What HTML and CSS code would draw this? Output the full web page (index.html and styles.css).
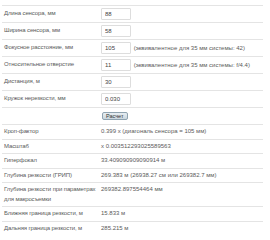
FILE: index.html
```html
<!DOCTYPE html>
<html lang="ru">
<head>
    <meta charset="UTF-8">
    <meta name="viewport" content="width=device-width, initial-scale=1.0">
    <title>Калькулятор ГРИП</title>
    <link rel="stylesheet" href="styles.css">
</head>
<body>

<div class="container">
    <table class="calc">
        <tr class="input-row">
            <td class="label">Длина сенсора, мм</td>
            <td><input type="text" value="88"></td>
        </tr>
        <tr class="input-row">
            <td class="label">Ширина сенсора, мм</td>
            <td><input type="text" value="58"></td>
        </tr>
        <tr class="input-row">
            <td class="label">Фокусное расстояние, мм</td>
            <td><input type="text" value="105"> <span class="hint">(эквивалентное для 35 мм системы: 42)</span></td>
        </tr>
        <tr class="input-row">
            <td class="label">Относительное отверстие</td>
            <td><input type="text" value="11"> <span class="hint">(эквивалентное для 35 мм системы: f/4.4)</span></td>
        </tr>
        <tr class="input-row">
            <td class="label">Дистанция, м</td>
            <td><input type="text" value="30"></td>
        </tr>
        <tr class="input-row">
            <td class="label">Кружок нерезкости, мм</td>
            <td><input type="text" value="0.030"></td>
        </tr>
        <tr class="input-row">
            <td class="label"></td>
            <td><button type="button">Расчет</button></td>
        </tr>
        <tr>
            <td class="label">Кроп-фактор</td>
            <td>0.399 x (диагональ сенсора = 105 мм)</td>
        </tr>
        <tr>
            <td class="label">Масштаб</td>
            <td>x 0.003512293025589563</td>
        </tr>
        <tr>
            <td class="label">Гиперфокал</td>
            <td>33.409090909090914 м</td>
        </tr>
        <tr>
            <td class="label">Глубина резкости (ГРИП)</td>
            <td>269.383 м (26938.27 см или 269382.7 мм)</td>
        </tr>
        <tr>
            <td class="label">Глубина резкости при параметрах для макросъемки</td>
            <td>269382.897554464 мм</td>
        </tr>
        <tr>
            <td class="label">Ближняя граница резкости, м</td>
            <td>15.833 м</td>
        </tr>
        <tr>
            <td class="label">Дальняя граница резкости, м</td>
            <td>285.215 м</td>
        </tr>
    </table>
</div>

</body>
</html>
```

FILE: styles.css
```css
body {
    font-family: "Liberation Sans", Arial, sans-serif;
    font-size: 6px;
    margin: 0;
    padding: 0;
    background-color: #fff;
    color: #5a5a5a;
}
.container {
    padding: 5px 7px 0 2px;
}
.calc {
    width: 100%;
    border-collapse: collapse;
    table-layout: fixed;
}
.calc td {
    border-top: 1px solid #e4e4e4;
    padding: 2px 2px;
    line-height: 9.5px;
    vertical-align: top;
    text-align: left;
    white-space: nowrap;
}
.calc td.label {
    width: 95px;
    padding-right: 0;
    white-space: normal;
    letter-spacing: -0.12px;
}
.input-row td {
    height: 12px;
    padding-top: 2px;
    padding-bottom: 2px;
    vertical-align: middle;
}
.calc input {
    font-family: inherit;
    font-size: 6px;
    color: #444;
    width: 22px;
    height: 10px;
    padding: 0 3px;
    margin: 0;
    box-sizing: content-box;
    border: 1px solid #ddd;
    border-radius: 1px;
    vertical-align: middle;
}
.calc button {
    font-family: inherit;
    font-size: 5.5px;
    color: #333;
    height: 8px;
    padding: 0 3px;
    margin: 0 0 0 1px;
    line-height: 6px;
    border: 1px solid #8fa3b0;
    border-radius: 2px;
    background: linear-gradient(#e8eef2, #c9d6de);
    vertical-align: middle;
}
.hint {
    margin-left: 1px;
}
```
